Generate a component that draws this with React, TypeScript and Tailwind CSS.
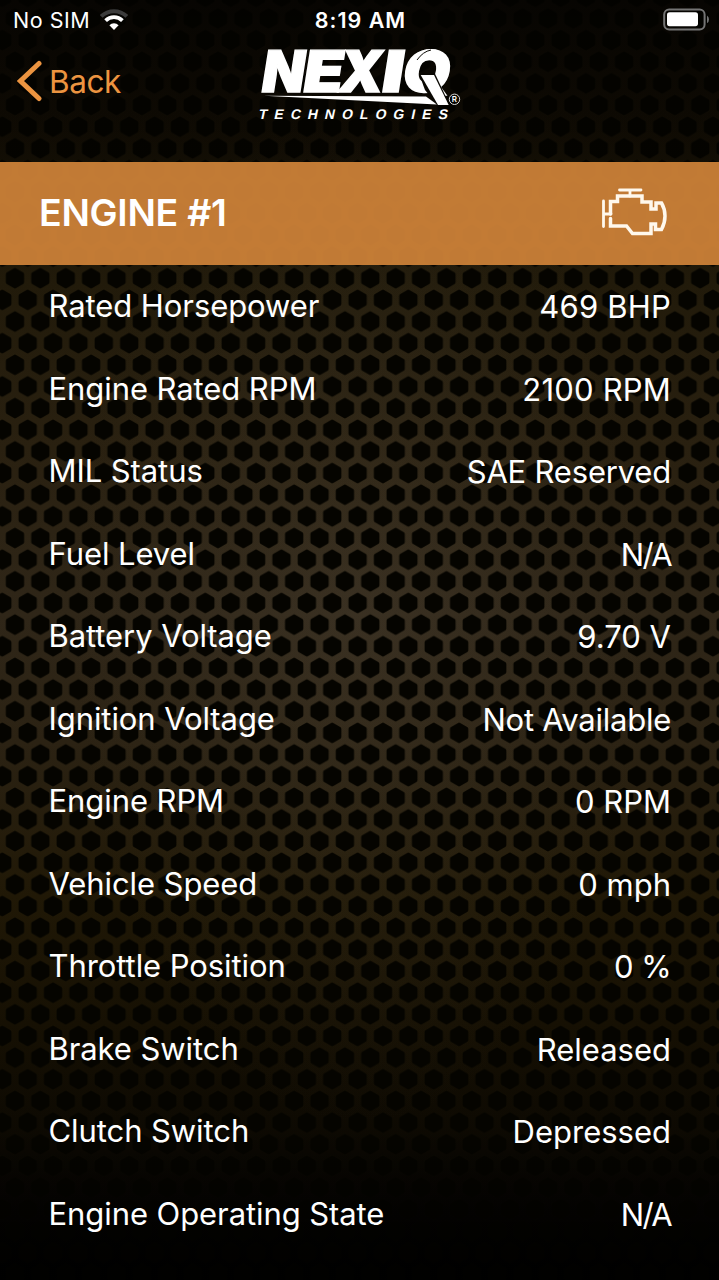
const rows = [
  { label: 'Rated Horsepower', value: '469 BHP' },
  { label: 'Engine Rated RPM', value: '2100 RPM' },
  { label: 'MIL Status', value: 'SAE Reserved' },
  { label: 'Fuel Level', value: 'N/A' },
  { label: 'Battery Voltage', value: '9.70 V' },
  { label: 'Ignition Voltage', value: 'Not Available' },
  { label: 'Engine RPM', value: '0 RPM' },
  { label: 'Vehicle Speed', value: '0 mph' },
  { label: 'Throttle Position', value: '0 %' },
  { label: 'Brake Switch', value: 'Released' },
  { label: 'Clutch Switch', value: 'Depressed' },
  { label: 'Engine Operating State', value: 'N/A' },
];

const VALUE_TRACKING: Record<string, string> = {
  'N/A': 'tracking-[-1.6px]',
  'SAE Reserved': 'tracking-[-0.2px]',
  'Not Available': 'tracking-[-0.25px]',
  '2100 RPM': 'tracking-[0.2px]',
  '469 BHP': 'tracking-[0.2px]',
  '0 %': 'tracking-[-0.6px]',
};

const HEX = 'M0 -7.9 L6.85 -3.95 V3.95 L0 7.9 L-6.85 3.95 V-3.95 Z';

function MeshBackground() {
  return (
    <svg className="absolute inset-0 h-full w-full" aria-hidden="true">
      <defs>
        <linearGradient id="fade" x1="0" y1="0" x2="0" y2="1">
          <stop offset="0" stopColor="#0b0803" />
          <stop offset="0.1" stopColor="#120d04" />
          <stop offset="0.22" stopColor="#211a0a" />
          <stop offset="0.35" stopColor="#292010" />
          <stop offset="0.48" stopColor="#2f2618" />
          <stop offset="0.58" stopColor="#2b2213" />
          <stop offset="0.7" stopColor="#201806" />
          <stop offset="0.8" stopColor="#161003" />
          <stop offset="0.9" stopColor="#0b0802" />
          <stop offset="1" stopColor="#000000" />
        </linearGradient>
        <radialGradient id="glow" cx="0.5" cy="0.48" r="0.4">
          <stop offset="0" stopColor="#6b6050" stopOpacity="0.18" />
          <stop offset="1" stopColor="#6b6050" stopOpacity="0" />
        </radialGradient>
        <pattern id="mesh" x="2.3" y="256.6" width="25.38" height="43.3" patternUnits="userSpaceOnUse">
          <g fill="#050400" stroke="#050400" strokeWidth="4.6" strokeLinejoin="round">
            <path d={HEX} transform="translate(12.69 21.65)" />
            <path d={HEX} />
            <path d={HEX} transform="translate(25.38 0)" />
            <path d={HEX} transform="translate(0 43.3)" />
            <path d={HEX} transform="translate(25.38 43.3)" />
          </g>
        </pattern>
        <linearGradient id="dark" x1="0" y1="0" x2="0" y2="1">
          <stop offset="0" stopColor="#000" stopOpacity="0.4" />
          <stop offset="0.2" stopColor="#000" stopOpacity="0" />
          <stop offset="0.88" stopColor="#000" stopOpacity="0" />
          <stop offset="1" stopColor="#000" stopOpacity="0.8" />
        </linearGradient>
      </defs>
      <rect width="100%" height="100%" fill="url(#fade)" />
      <rect width="100%" height="100%" fill="url(#glow)" />
      <rect width="100%" height="100%" fill="url(#mesh)" />
      <rect width="100%" height="100%" fill="url(#dark)" />
    </svg>
  );
}

function WifiIcon() {
  return (
    <svg className="ml-[10px] h-[22px] w-[28px]" viewBox="0 0 28 22" fill="none">
      <path d="M1.2 7.4 A18.3 18.3 0 0 1 26.8 7.4" stroke="#3c3c3c" strokeWidth="4" />
      <path d="M5.6 11.6 A12 12 0 0 1 22.4 11.6" stroke="#fff" strokeWidth="3.8" />
      <path d="M14 21 L9.4 16.2 A6.6 6.6 0 0 1 18.6 16.2 Z" fill="#fff" />
    </svg>
  );
}

function BatteryIcon() {
  return (
    <svg className="h-[24px] w-[48px]" viewBox="0 0 48 24" fill="none">
      <rect x="1.2" y="1.4" width="40.4" height="20" rx="5" stroke="#747474" strokeWidth="2" />
      <rect x="4" y="4.2" width="31" height="14" rx="2.6" fill="#fff" />
      <path d="M44 7.6 Q46 9 46 11.4 Q46 13.8 44 15.2 Z" fill="#747474" />
    </svg>
  );
}

function NexiqLogo() {
  return (
    <svg className="h-[122px] w-[240px] overflow-visible" viewBox="0 40 240 122" fill="#fff">
      <g fontFamily="Inter, sans-serif" fontWeight="900" fontSize="57.5" stroke="#fff" strokeWidth="1.4">
        <text transform="translate(19.5 92.2) skewX(-9)" textLength="43" lengthAdjust="spacingAndGlyphs">N</text>
        <text transform="translate(61 92.2) skewX(-9)" textLength="40" lengthAdjust="spacingAndGlyphs">E</text>
        <text transform="translate(96.5 92.2) skewX(-9)" textLength="44" lengthAdjust="spacingAndGlyphs">X</text>
        <text transform="translate(139.5 92.2) skewX(-9)" textLength="22" lengthAdjust="spacingAndGlyphs">I</text>
        <text transform="translate(160.5 92.2) skewX(-9)" textLength="48" lengthAdjust="spacingAndGlyphs">Q</text>
      </g>
      <path d="M24 95.8 L186 96.6 L197 104.5 Z" />
      <path d="M179 73.8 H195 L210 105.6 H197.5 L185 90 Z" fill="#090702" />
      <path d="M180.7 75 H194 L208.7 105 H198 Z" />
      <path d="M177 60 Q183 51.5 191 50" fill="none" stroke="#090702" strokeWidth="1" />
      <circle cx="214.5" cy="99.3" r="5.2" fill="none" stroke="#ddd" strokeWidth="1" />
      <text x="211.8" y="102.3" fontFamily="Inter, sans-serif" fontWeight="600" fontSize="8">R</text>
      <text
        transform="translate(18 118.8) skewX(-12)"
        fontFamily="'Liberation Sans', sans-serif"
        fontWeight="700"
        fontSize="14"
        textLength="189"
      >
        TECHNOLOGIES
      </text>
    </svg>
  );
}

function EngineIcon() {
  return (
    <svg
      className="mb-[3px] h-[50px] w-[66px] overflow-visible"
      viewBox="0 0 66 50"
      fill="none"
      stroke="#fff8ec"
      strokeWidth="3.5"
      strokeLinejoin="miter"
      strokeLinecap="round"
    >
      <path d="M18.5 3 H40 M29 3 V9" strokeWidth="2.8" />
      <path d="M2.5 14 V39.5 M2.5 27 H10" strokeWidth="2.8" />
      <path d="M9.5 27 V14.5 H16.5 V9 H41 V15 H50 V22 H55 V16 H60.5 Q64 22 64 29 Q64 36 60.5 42.5 H54.5 V37 H50 V46.5 H31.5 L25.5 39 H9.5 V31.5" />
    </svg>
  );
}

export default function App() {
  return (
    <div className="relative h-[1280px] w-[719px] overflow-hidden bg-black font-['Inter',sans-serif] text-white">
      <MeshBackground />
      <div className="relative flex h-full flex-col">
        <div className="grid h-10 grid-cols-3 items-center">
          <div className="flex items-center pl-[13px]">
            <span className="text-[21.5px] tracking-[0.5px]">No SIM</span>
            <WifiIcon />
          </div>
          <span className="pl-[2px] text-center text-[21.5px] font-semibold tracking-[1px]">8:19 AM</span>
          <div className="flex justify-end pr-[8px]">
            <BatteryIcon />
          </div>
        </div>

        <header className="grid h-[122px] grid-cols-[240px_240px_239px] items-start">
          <button className="flex h-[82px] items-center pl-[17px] text-[#ec9440]">
            <svg className="h-[42px] w-[26px]" viewBox="0 0 26 42" fill="none">
              <path d="M22 3.5 L3.5 21 L22 38.5" stroke="currentColor" strokeWidth="5" strokeLinecap="round" />
            </svg>
            <span className="ml-[6px] pt-[1px] text-[31.5px] tracking-[-0.4px]">Back</span>
          </button>
          <NexiqLogo />
        </header>

        <section className="flex h-[103px] shrink-0 items-center justify-between bg-[#d08339]/93 pr-[52px] pl-[39px]">
          <h1 className="text-[37.5px] font-semibold tracking-[-0.3px]">ENGINE #1</h1>
          <EngineIcon />
        </section>

        <dl className="flex flex-col">
          {rows.map((row) => (
            <div
              key={row.label}
              className="flex h-[82.5px] items-center justify-between pr-[48px] pl-[48.5px] text-[31px] leading-[40px]"
            >
              <dt className="tracking-[-0.08px]">{row.label}</dt>
              <dd className={`pt-[2px] ${VALUE_TRACKING[row.value] ?? ''}`}>{row.value}</dd>
            </div>
          ))}
        </dl>
      </div>
    </div>
  );
}
